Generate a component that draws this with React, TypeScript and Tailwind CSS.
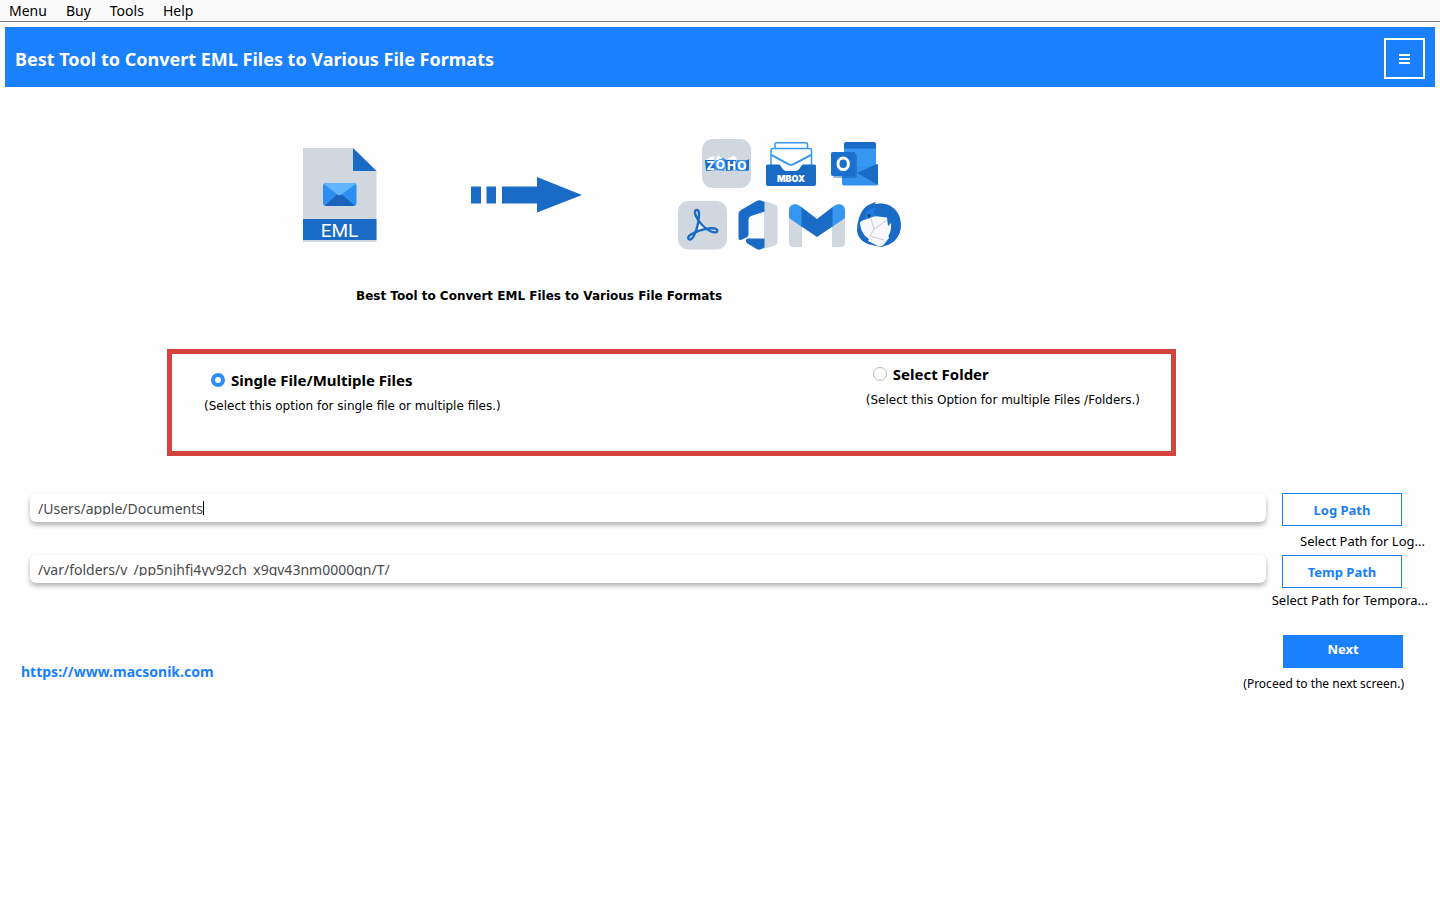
import React, { useState } from "react";

const BLUE = "#1a6bc6";
const LIGHT = "#3797f0";
const GREY = "#d0d7df";

function EmlFileIcon() {
  return (
    <svg width="74" height="94" viewBox="0 0 74 94" role="img" aria-label="EML file">
      <path d="M0 0H50L73.500 23V94H0Z" fill={GREY} />
      <path d="M50 0L73.500 23H50Z" fill={BLUE} />
      <rect x="20" y="35" width="33.500" height="23" rx="3" fill="#2f8ff0" />
      <path d="M22 57.500L34 46.500H39L51.500 57.500Q50.800 58 50 58H23Q22.400 58 22 57.500Z" fill="#1a62ba" />
      <path d="M21 36Q22 35 23 35H50.500Q52 35 52.500 36L38.500 46.500Q36.500 48 34.500 46.500Z" fill="#62b5fb" />
      <rect x="0" y="71" width="73.500" height="21" fill={BLUE} />
      <text x="36.500" y="88.500" textAnchor="middle" fontSize="19" fill="#fff" fontFamily="Roboto, sans-serif">EML</text>
    </svg>
  );
}

function ArrowIcon() {
  return (
    <svg width="111" height="36" viewBox="0 0 111 36" aria-hidden="true" fill={BLUE}>
      <rect x="0" y="9.500" width="10" height="17" />
      <rect x="15.500" y="9.500" width="9.500" height="17" />
      <path d="M31 9.500H66V0L111 18L66 35.500V26.500H31Z" />
    </svg>
  );
}

function ZohoIcon() {
  const font = { fontSize: 12, fontWeight: 800, fontFamily: "Inter, sans-serif", fill: "#fff", textAnchor: "middle" as const };
  return (
    <svg width="49" height="49" viewBox="0 0 49 49" role="img" aria-label="Zoho">
      <rect width="49" height="49" rx="11" fill={GREY} />
      <path d="M3 21L12 20L14 31L4 32Z" fill={BLUE} />
      <path d="M3 21L10 17.500L13 18L12 21Z" fill="#fff" />
      <path d="M12 22L18 17L26 22L22 32L13 31Z" fill={LIGHT} />
      <path d="M13 21.500L16 16.500L21 18.500L19 20Z" fill="#fff" />
      <path d="M23 21L34 20L36 31L24 32Z" fill={BLUE} />
      <path d="M24 20.500L32 16.500L35 20L34 21Z" fill="#fff" />
      <path d="M35 21H46V32H35Z" fill={LIGHT} />
      <path d="M44 22L47 20V31L44 32Z" fill={BLUE} />
      <text x="8.500" y="30.800" {...font}>Z</text>
      <text x="18.500" y="30" {...font}>O</text>
      <text x="29.500" y="30.800" {...font}>H</text>
      <text x="40" y="30.800" {...font}>O</text>
    </svg>
  );
}

function MboxIcon() {
  return (
    <svg width="50" height="44" viewBox="0 0 50 44" role="img" aria-label="MBOX">
      <g fill="#fff" stroke={LIGHT} strokeWidth="1.500">
        <path d="M9 6V2Q9 .800 10.500 .800H40Q41.500 .800 41.500 2V6" />
        <path d="M5 30V8.500Q5 6.500 7 6.500H43.500Q45.500 6.500 45.500 8.500V30Z" />
        <path d="M5.500 13L23 22.500Q25 23.700 27 22.500L45 13" fill="none" />
      </g>
      <path d="M14 22H36L33 28H17Z" fill="#fff" />
      <path d="M5.500 13L23 22.500Q25 23.700 27 22.500L45 13" fill="none" stroke={LIGHT} strokeWidth="1.500" />
      <path d="M1.500 22.500H13C15 22.500 16 29 21 29H29C34 29 35 22.500 37 22.500H48.500Q50 22.500 50 24V42Q50 44 48 44H2Q0 44 0 42V24Q0 22.500 1.500 22.500Z" fill={BLUE} />
      <text x="25" y="40.200" textAnchor="middle" fontSize="9" fontWeight="900" fill="#fff" fontFamily="Inter, sans-serif">MBOX</text>
    </svg>
  );
}

function OutlookIcon() {
  return (
    <svg width="48" height="44" viewBox="0 0 48 44" role="img" aria-label="Outlook">
      <path d="M13 7V2Q13 0 15 0H43Q45 0 45 2V7Z" fill={BLUE} />
      <path d="M13 6.500H45V31H13Z" fill={LIGHT} />
      <path d="M11 27L47 23V41.500Q47 43.500 45 43.500H13Q11 43.500 11 41.500Z" fill="#3390ec" />
      <path d="M26 31L46 22Q47 22 47 23V43Z" fill={BLUE} />
      <rect x="2" y="12" width="24" height="24" rx="2" fill="#1557a6" opacity=".45" />
      <rect x="0" y="10" width="24.500" height="24" rx="2" fill="#1b6fcc" />
      <ellipse cx="12.200" cy="21.800" rx="5.200" ry="5.800" fill="none" stroke="#fff" strokeWidth="3" />
    </svg>
  );
}

function PdfIcon() {
  return (
    <svg width="49" height="49" viewBox="0 0 49 49" role="img" aria-label="PDF">
      <rect width="49" height="48.500" rx="10" fill={GREY} />
      <path d="M20.500 16L25 23L32 28L17 32L19.500 25Z" fill="#fff" />
      <path
        d="M19 9C16.800 9 16.500 11.500 17.500 14C20 20.500 27 28 33 30.500C36.500 32 39.300 31.500 39.300 29.500C39.300 27.500 36.500 27 33 27.300C26 28 18 30.500 13 33.500C10 35.300 9.500 37.500 11 38.300C12.700 39.200 14.500 37.500 16 34.500C19 28.500 20.800 20 21 14C21.100 11 20.800 9 19 9Z"
        fill="none"
        stroke={BLUE}
        strokeWidth="2.400"
      />
    </svg>
  );
}

function OfficeIcon() {
  return (
    <svg width="40" height="50" viewBox="0 0 40 50" role="img" aria-label="Office">
      <path d="M26 1L37 4.500Q39.500 5.500 39.500 8V42Q39.500 44.500 37 45.500L26 49Z" fill={GREY} />
      <path d="M19 .800Q21 -.200 23 .600L26.500 2V11.500L13 16Q10.500 17 10.500 19.500V34.500Q10.500 36.500 8.500 37.500L3.500 39.800Q.500 41 .500 37.500V14Q.500 11.500 3 10Z" fill={BLUE} />
      <path d="M9 38.500H26.500V47.500L23 49.300Q21 50 19 49.200L9.500 43.500Q6.500 41 9 38.500Z" fill={BLUE} />
    </svg>
  );
}

function GmailIcon() {
  return (
    <svg width="56" height="43" viewBox="0 0 56 43" role="img" aria-label="Gmail">
      <path d="M0 11L13 18V43H4Q0 43 0 39Z" fill={GREY} />
      <path d="M56 11L43 18V43H52Q56 43 56 39Z" fill={GREY} />
      <path d="M0 14V6.500C0 .500 6 -1.500 11 2L13 3.500V23Z" fill={LIGHT} />
      <path d="M56 14V6.500C56 .500 50 -1.500 45 2L43 3.500V23Z" fill={LIGHT} />
      <path d="M12.500 3L28 15L43.500 3V22.500L28 33L12.500 22.500Z" fill={BLUE} />
    </svg>
  );
}

function ThunderbirdIcon() {
  return (
    <svg width="46" height="46" viewBox="0 0 46 46" role="img" aria-label="Thunderbird">
      <path d="M2 20C4 10 9 3.500 16 1.500L19.500 0L19 2C33 -1 45 8 45 23C45 35 37 42 30 43.500L26 45C22 44 18 44 14 42C6 39 1 31 2 20Z" fill={BLUE} />
      <path d="M4 20C7 18 9 17 13 16.500L18 14L31 15.500L32 24L35 21C35.500 27 34.500 30 32.500 34L33 36L29 41C28 43.500 25 45 22 44L12 39L13 37C8 34 4 28 4 20Z" fill="#f6f8fb" />
      <path d="M15 17L18 27L31 18M18 27L14 34L28 38" fill="none" stroke="#cdb9bd" strokeWidth=".8" />
      <path d="M1.500 20L1 29C2 37 9 42 16 43C12 40 11 38 10 35L8 36L7 30L5 32L4.500 25L2.500 27Z" fill={BLUE} />
      <path d="M9 18C8 10 14 5 22 6C17 7.500 17 11 21 14C17 15 13 14.500 9 18Z" fill="#1e7ce0" />
      <circle cx="13" cy="13.500" r="1.500" fill="#123a68" />
    </svg>
  );
}

const sans = "font-['Noto_Sans','Open_Sans',sans-serif]";
const wide = "font-['DejaVu_Sans',Verdana,sans-serif]";

type OptionProps = {
  id: string;
  title: string;
  note: string;
  checked: boolean;
  onSelect: () => void;
};

function Option({ id, title, note, checked, onSelect }: OptionProps) {
  return (
    <div className="flex flex-col">
      <div className="flex h-5 items-center gap-1.5 pl-[7px]">
        <input
          id={id}
          type="radio"
          name="source"
          checked={checked}
          onChange={onSelect}
          className="size-3.5 appearance-none rounded-full border border-[#bdbdbd] bg-white checked:border-4 checked:border-[#2a8df8]"
        />
        <label htmlFor={id} className={`${sans} text-[15px] leading-5 font-bold`}>{title}</label>
      </div>
      <p className={`${wide} mt-2 text-xs leading-4`}>{note}</p>
    </div>
  );
}

type PathFieldProps = {
  label: string;
  value: string;
  onChange: (value: string) => void;
  cursor?: boolean;
};

function PathField({ label, value, onChange, cursor }: PathFieldProps) {
  return (
    <div className="h-7 rounded-md bg-white px-2 pt-[3px] shadow-[0_3px_5px_rgba(0,0,0,0.3)]">
      <div className="flex h-[18px] overflow-hidden">
        <input
          type="text"
          aria-label={label}
          value={value}
          onChange={(e) => onChange(e.target.value)}
          className={`${sans} h-[22px] [field-sizing:content] bg-transparent text-sm text-[#4a4a4a] outline-none`}
        />
        {cursor && <span className="mt-1 h-3.5 w-px bg-black" />}
      </div>
    </div>
  );
}

export default function App() {
  const [source, setSource] = useState("files");
  const [logPath, setLogPath] = useState("/Users/apple/Documents");
  const [tempPath, setTempPath] = useState("/var/folders/v_/pp5njhfj4yv92ch_x9qv43nm0000gn/T/");
  const outline = `${sans} h-[33px] w-[120px] border border-[#1a7ffb] bg-white text-[13px] font-bold text-[#1a7ffb]`;

  return (
    <div className="min-h-screen bg-[#fefefe] text-black">
      <nav className={`${sans} flex h-[22px] items-center gap-[19px] border-b border-[#7b7b80] bg-[#fafafa] px-[9px] text-sm`}>
        {["Menu", "Buy", "Tools", "Help"].map((item) => (
          <button key={item} type="button" className="leading-5">{item}</button>
        ))}
      </nav>

      <header className="mx-[5px] mt-[5px] flex h-[60px] items-center justify-between bg-[#1a80fc] px-2.5 text-white">
        <h1 className={`${sans} mt-1 text-lg font-bold`}>Best Tool to Convert EML Files to Various File Formats</h1>
        <button type="button" aria-label="Open menu" className="mt-0.5 flex h-[41px] w-[41px] items-center justify-center border-2 border-white">
          <svg width="11" height="11" viewBox="0 0 11 11" fill="#fff" aria-hidden="true">
            <rect y="1" width="11" height="2" />
            <rect y="5" width="11" height="2" />
            <rect y="9" width="11" height="2" />
          </svg>
        </button>
      </header>

      <section className="mt-[52px] ml-[303px] flex items-start">
        <div className="mt-[9px]"><EmlFileIcon /></div>
        <div className="mt-[38px] ml-[94px]"><ArrowIcon /></div>
        <div className="ml-24 flex flex-col gap-3">
          <div className="flex items-center gap-[15px] pl-6">
            <ZohoIcon />
            <MboxIcon />
            <OutlookIcon />
          </div>
          <div className="flex items-center gap-[11px]">
            <PdfIcon />
            <OfficeIcon />
            <GmailIcon />
            <ThunderbirdIcon />
          </div>
        </div>
      </section>

      <h2 className={`${wide} mt-9 ml-[356px] text-xs leading-5 font-bold`}>Best Tool to Convert EML Files to Various File Formats</h2>

      <div role="radiogroup" aria-label="Source selection" className="mt-[43px] mr-[264px] ml-[167px] flex h-[107px] justify-between border-5 border-[#d5433d] pr-[31px] pl-8">
        <div className="pt-4">
          <Option id="files" title="Single File/Multiple Files" note="(Select this option for single file or multiple files.)" checked={source === "files"} onSelect={() => setSource("files")} />
        </div>
        <div className="pt-2.5">
          <Option id="folder" title="Select Folder" note="(Select this Option for multiple Files /Folders.)" checked={source === "folder"} onSelect={() => setSource("folder")} />
        </div>
      </div>

      <section className="mt-[37px] flex pr-3 pl-[30px]">
        <div className="flex flex-1 flex-col gap-[33px] pt-px">
          <PathField label="Log path" value={logPath} onChange={setLogPath} cursor />
          <PathField label="Temp path" value={tempPath} onChange={setTempPath} />
        </div>
        <div className={`${sans} flex w-[162px] flex-col text-[13px] leading-5`}>
          <button type="button" className={`${outline} ml-4`}>Log Path</button>
          <p className="mt-[5px] mb-1 pr-[3px] text-right">Select Path for Log...</p>
          <button type="button" className={`${outline} ml-4`}>Temp Path</button>
          <p className="mt-0.5 text-right">Select Path for Tempora...</p>
        </div>
      </section>

      <footer className="mt-[25px] flex items-start justify-between pr-9 pl-[21px]">
        <a href="https://www.macsonik.com" className={`${sans} mt-[27px] text-sm leading-5 font-bold text-[#1a7ffb]`}>https://www.macsonik.com</a>
        <div className="flex flex-col items-end">
          <button type="button" className={`${sans} mr-px h-[33px] w-[120px] bg-[#1a80fc] pb-1 text-[13px] font-bold text-white`}>Next</button>
          <p className={`${sans} mt-1.5 text-xs leading-5`}>(Proceed to the next screen.)</p>
        </div>
      </footer>
    </div>
  );
}
